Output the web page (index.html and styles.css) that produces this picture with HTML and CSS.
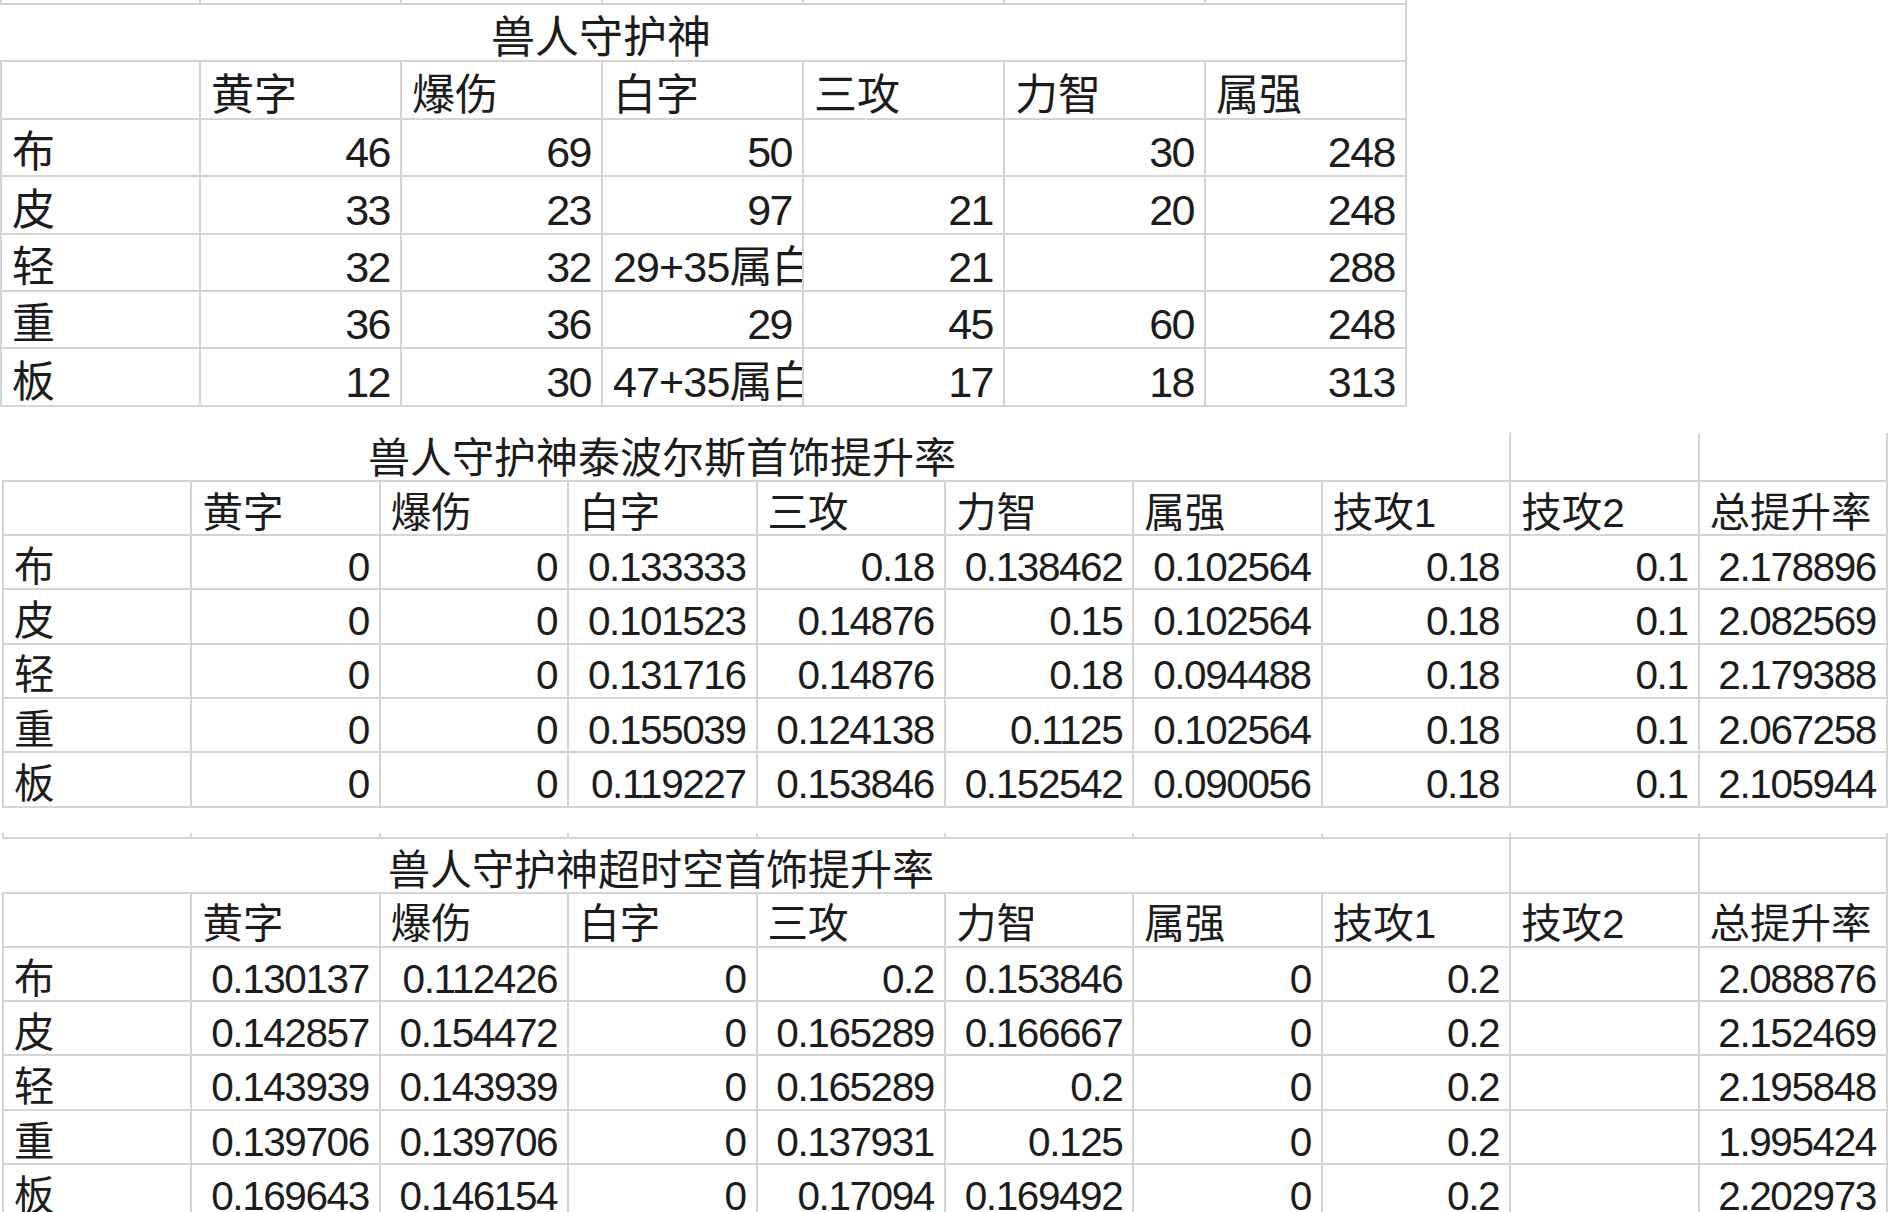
FILE: index.html
```html
<!DOCTYPE html>
<html lang="zh-CN">
<head>
<meta charset="utf-8">
<title>兽人守护神</title>
<link rel="stylesheet" href="styles.css">
</head>
<body>
<div class="sheet">

  <table class="grid t1">
    <colgroup>
      <col class="c1"><col class="c1"><col class="c1"><col class="c1"><col class="c1"><col class="c1"><col class="c1">
    </colgroup>
    <tr class="stub"><td class="first"></td><td></td><td></td><td></td><td></td><td></td><td></td></tr>
    <tr class="row"><td class="ttl" colspan="7">兽人守护神</td></tr>
    <tr class="row"><td class="first"></td><td>黄字</td><td>爆伤</td><td>白字</td><td>三攻</td><td>力智</td><td>属强</td></tr>
    <tr class="row"><td class="first">布</td><td class="n">46</td><td class="n">69</td><td class="n">50</td><td></td><td class="n">30</td><td class="n">248</td></tr>
    <tr class="row"><td class="first">皮</td><td class="n">33</td><td class="n">23</td><td class="n">97</td><td class="n">21</td><td class="n">20</td><td class="n">248</td></tr>
    <tr class="row"><td class="first">轻</td><td class="n">32</td><td class="n">32</td><td class="txt">29+35属白</td><td class="n">21</td><td></td><td class="n">288</td></tr>
    <tr class="row"><td class="first">重</td><td class="n">36</td><td class="n">36</td><td class="n">29</td><td class="n">45</td><td class="n">60</td><td class="n">248</td></tr>
    <tr class="row"><td class="first">板</td><td class="n">12</td><td class="n">30</td><td class="txt">47+35属白</td><td class="n">17</td><td class="n">18</td><td class="n">313</td></tr>
  </table>

  <table class="grid t2">
    <colgroup>
      <col class="c0"><col class="c2"><col class="c2"><col class="c2"><col class="c2"><col class="c2"><col class="c2"><col class="c2"><col class="c2"><col class="c2">
    </colgroup>
    <tr class="cap"><td class="ttl" colspan="8">兽人守护神泰波尔斯首饰提升率</td><td></td><td></td></tr>
    <tr class="row"><td class="first"></td><td>黄字</td><td>爆伤</td><td>白字</td><td>三攻</td><td>力智</td><td>属强</td><td>技攻1</td><td>技攻2</td><td>总提升率</td></tr>
    <tr class="row"><td class="first">布</td><td class="n">0</td><td class="n">0</td><td class="n">0.133333</td><td class="n">0.18</td><td class="n">0.138462</td><td class="n">0.102564</td><td class="n">0.18</td><td class="n">0.1</td><td class="n">2.178896</td></tr>
    <tr class="row"><td class="first">皮</td><td class="n">0</td><td class="n">0</td><td class="n">0.101523</td><td class="n">0.14876</td><td class="n">0.15</td><td class="n">0.102564</td><td class="n">0.18</td><td class="n">0.1</td><td class="n">2.082569</td></tr>
    <tr class="row"><td class="first">轻</td><td class="n">0</td><td class="n">0</td><td class="n">0.131716</td><td class="n">0.14876</td><td class="n">0.18</td><td class="n">0.094488</td><td class="n">0.18</td><td class="n">0.1</td><td class="n">2.179388</td></tr>
    <tr class="row"><td class="first">重</td><td class="n">0</td><td class="n">0</td><td class="n">0.155039</td><td class="n">0.124138</td><td class="n">0.1125</td><td class="n">0.102564</td><td class="n">0.18</td><td class="n">0.1</td><td class="n">2.067258</td></tr>
    <tr class="row"><td class="first">板</td><td class="n">0</td><td class="n">0</td><td class="n">0.119227</td><td class="n">0.153846</td><td class="n">0.152542</td><td class="n">0.090056</td><td class="n">0.18</td><td class="n">0.1</td><td class="n">2.105944</td></tr>
  </table>

  <table class="grid t3">
    <colgroup>
      <col class="c0"><col class="c2"><col class="c2"><col class="c2"><col class="c2"><col class="c2"><col class="c2"><col class="c2"><col class="c2"><col class="c2">
    </colgroup>
    <tr class="stub"><td class="first"></td><td></td><td></td><td></td><td></td><td></td><td></td><td></td><td></td><td></td></tr>
    <tr class="cap"><td class="ttl" colspan="8">兽人守护神超时空首饰提升率</td><td></td><td></td></tr>
    <tr class="row"><td class="first"></td><td>黄字</td><td>爆伤</td><td>白字</td><td>三攻</td><td>力智</td><td>属强</td><td>技攻1</td><td>技攻2</td><td>总提升率</td></tr>
    <tr class="row"><td class="first">布</td><td class="n">0.130137</td><td class="n">0.112426</td><td class="n">0</td><td class="n">0.2</td><td class="n">0.153846</td><td class="n">0</td><td class="n">0.2</td><td></td><td class="n">2.088876</td></tr>
    <tr class="row"><td class="first">皮</td><td class="n">0.142857</td><td class="n">0.154472</td><td class="n">0</td><td class="n">0.165289</td><td class="n">0.166667</td><td class="n">0</td><td class="n">0.2</td><td></td><td class="n">2.152469</td></tr>
    <tr class="row"><td class="first">轻</td><td class="n">0.143939</td><td class="n">0.143939</td><td class="n">0</td><td class="n">0.165289</td><td class="n">0.2</td><td class="n">0</td><td class="n">0.2</td><td></td><td class="n">2.195848</td></tr>
    <tr class="row"><td class="first">重</td><td class="n">0.139706</td><td class="n">0.139706</td><td class="n">0</td><td class="n">0.137931</td><td class="n">0.125</td><td class="n">0</td><td class="n">0.2</td><td></td><td class="n">1.995424</td></tr>
    <tr class="row"><td class="first">板</td><td class="n">0.169643</td><td class="n">0.146154</td><td class="n">0</td><td class="n">0.17094</td><td class="n">0.169492</td><td class="n">0</td><td class="n">0.2</td><td></td><td class="n">2.202973</td></tr>
  </table>

</div>
</body>
</html>
```

FILE: styles.css
```css
html, body {
  margin: 0;
  padding: 0;
  background: #ffffff;
  height: 1212px;
  overflow: hidden;
}

body {
  font-family: "Liberation Sans", "Noto Sans CJK SC", sans-serif;
  color: #1c1c1c;
}

.sheet {
  display: flex;
  flex-direction: column;
  align-items: flex-start;
}

.grid {
  border-collapse: separate;
  border-spacing: 0;
  table-layout: fixed;
}

.grid td {
  padding: 0 10px 1px 10px;
  vertical-align: bottom;
  line-height: 1;
  white-space: nowrap;
  overflow: hidden;
  text-align: left;
  border-right: 2px solid #d4d4d4;
  border-bottom: 2px solid #d4d4d4;
}

.grid td.first {
  border-left: 2px solid #d4d4d4;
}

.grid td.n {
  text-align: right;
  letter-spacing: -0.035em;
}

.grid td.txt {
  letter-spacing: -0.02em;
}

/* table 1 */
.t1 {
  width: 1407px;
  font-size: 43px;
}

.t1 .c1 {
  width: 201px;
}

.t1 tr.stub {
  height: 5px;
}

.t1 tr.row {
  height: 57.4px;
}

.t1 td.ttl {
  padding-left: 491px;
  padding-bottom: 0;
  font-size: 44px;
}

/* tables 2 and 3 */
.t2,
.t3 {
  width: 1885.6px;
  margin-left: 2px;
  font-size: 40.5px;
}

.t2 .c0,
.t3 .c0 {
  width: 190.4px;
}

.t2 .c2,
.t3 .c2 {
  width: 188.4px;
}

.t2 {
  margin-top: 26px;
}

.t3 {
  margin-top: 25px;
}

.t2 tr.row,
.t3 tr.row {
  height: 54.3px;
}

.t2 tr.cap {
  height: 49px;
}

.t3 tr.stub {
  height: 6px;
}

.t3 tr.cap {
  height: 55px;
}

.t2 td.ttl {
  padding-left: 366px;
  padding-bottom: 0;
  font-size: 42px;
}

.t3 td.ttl {
  padding-left: 386px;
  padding-bottom: 0;
  font-size: 42px;
}
```
